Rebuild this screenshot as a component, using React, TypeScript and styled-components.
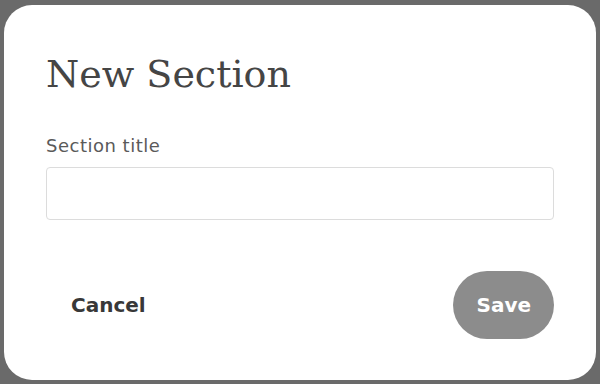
import * as React from 'react';
import styled, { createGlobalStyle } from 'styled-components';

const GlobalStyle = createGlobalStyle`
  html, body {
    margin: 0;
    padding: 0;
    background: #6a6a6a;
  }
  * {
    box-sizing: border-box;
  }
`;

const Backdrop = styled.div`
  min-height: 100vh;
  padding: 5px 4px 4px 4px;
  background: #6a6a6a;
`;

const Dialog = styled.div`
  background: #ffffff;
  border-radius: 28px;
  padding: 46px 42px 41px 42px;
  display: flex;
  flex-direction: column;
`;

const Title = styled.h1`
  margin: 0;
  font-family: 'DejaVu Serif', 'Liberation Serif', serif;
  font-weight: normal;
  font-size: 38px;
  line-height: 46px;
  color: #454545;
`;

const Label = styled.label`
  margin-top: 38px;
  font-family: 'DejaVu Sans', 'Liberation Sans', sans-serif;
  font-size: 18px;
  line-height: 22px;
  letter-spacing: 0.5px;
  color: #5a5a5a;
`;

const TextInput = styled.input`
  margin-top: 10px;
  height: 53px;
  width: 100%;
  border: 1px solid #dcdcdc;
  border-radius: 4px;
  padding: 0 14px;
  font-family: 'DejaVu Sans', 'Liberation Sans', sans-serif;
  font-size: 18px;
  color: #222;
  outline: none;
`;

const Actions = styled.div`
  margin-top: 51px;
  display: flex;
  align-items: center;
  justify-content: space-between;
`;

const ActionButton = styled.button<{ $primary?: boolean }>`
  height: 68px;
  padding: 0 ${(p) => (p.$primary ? '23px' : '25px')};
  border: none;
  border-radius: 34px;
  background: ${(p) => (p.$primary ? '#8c8c8c' : 'transparent')};
  color: ${(p) => (p.$primary ? '#ffffff' : '#383838')};
  font-family: 'DejaVu Sans', 'Liberation Sans', sans-serif;
  font-weight: bold;
  font-size: 20px;
  cursor: pointer;
`;

export default function App(): JSX.Element {
  const [title, setTitle] = React.useState('');

  return (
    <>
      <GlobalStyle />
      <Backdrop>
        <Dialog role="dialog">
          <Title>New Section</Title>
          <Label htmlFor="section-title">Section title</Label>
          <TextInput
            id="section-title"
            value={title}
            onChange={(e) => setTitle(e.target.value)}
          />
          <Actions>
            <ActionButton>Cancel</ActionButton>
            <ActionButton $primary disabled={!title}>
              Save
            </ActionButton>
          </Actions>
        </Dialog>
      </Backdrop>
    </>
  );
}
